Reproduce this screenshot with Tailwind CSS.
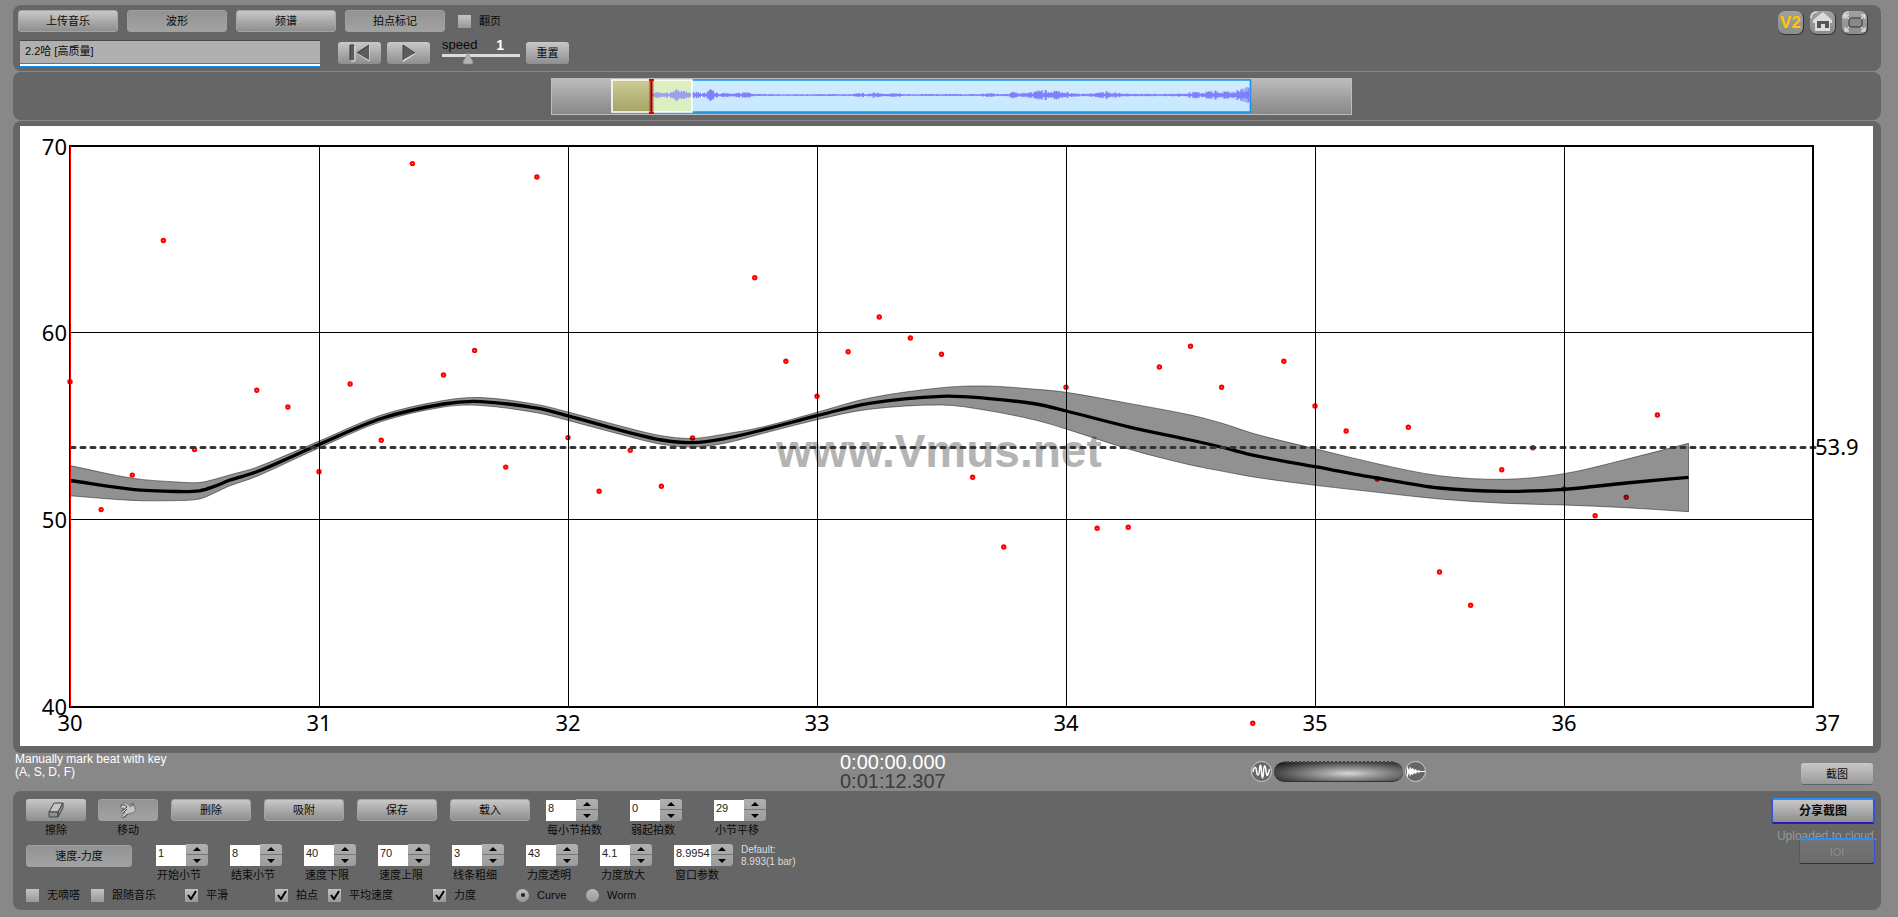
<!DOCTYPE html>
<html lang="zh-CN">

<head>
    <meta charset="UTF-8">
    <meta name="viewport" content="width=device-width, initial-scale=1.0">
    <title>Vmus.net</title>
    <script src="https://cdn.jsdelivr.net/npm/@tailwindcss/browser@4"></script>
</head>

<body class="min-h-screen bg-[#888] pt-[5px] pr-[17px] pb-[7px] pl-[13px] text-[11px] leading-[14px] text-[#0a0a0a]" style='font-family: "Liberation Sans", "Noto Sans CJK SC", sans-serif;'>

    <!-- Toolbar -->
    <header class="flex h-[66px] items-start justify-between rounded-lg bg-[#666] pt-[5px] pr-[13px] pl-[5px]">
        <div>
            <div class="flex h-[22px] items-center gap-[9px]">
                <button class="h-[22px] w-[100px] rounded-[3px] border border-[#a4a4a4] bg-linear-to-b from-[#c8c8c8] to-[#8e8e8e]">上传音乐</button>
                <button class="h-[22px] w-[100px] rounded-[3px] border border-[#a0a0a0] bg-linear-to-b from-[#939393] to-[#a2a2a2]">波形</button>
                <button class="h-[22px] w-[100px] rounded-[3px] border border-[#a4a4a4] bg-linear-to-b from-[#c8c8c8] to-[#8e8e8e]">频谱</button>
                <button class="h-[22px] w-[100px] rounded-[3px] border border-[#a0a0a0] bg-linear-to-b from-[#939393] to-[#a2a2a2]">拍点标记</button>
                <label class="flex items-center gap-2 pl-1"><input type="checkbox" class="size-[13px] appearance-none bg-linear-to-b from-[#c4c4c4] to-[#989898]">翻页</label>
            </div>
            <div class="flex h-[35px] items-start pt-2">
                <div class="ml-0.5 h-[27px] w-[300px] border-t border-[#484848] bg-[#b0b0b0]">
                    <input aria-label="Track" type="text" value="2.2哈 [高质量]" class="block h-[22px] w-full px-[5px] pb-1 text-[11px] outline-none">
                    <div class="h-[4px] border-y border-[#0a8cf0] bg-white"></div>
                </div>
                <button aria-label="Back to start" class="mt-0.5 ml-[18px] flex h-[22px] w-[43px] items-center justify-center rounded-[3px] bg-linear-to-b from-[#c8c8c8] to-[#8e8e8e]">
                    <svg width="22" height="18" viewBox="0 0 22 18"><path d="M2 17h4V2M20 1v16L8 9" fill="none" stroke="#ddd" /><path d="M1 1h4v15H1zM20 1v15L8 9z" fill="#5c5c5c" /><path d="M1 16V1h4M8 9l12-8" fill="none" stroke="#333" /></svg>
                </button>
                <button aria-label="Play" class="mt-0.5 ml-1.5 flex h-[22px] w-[43px] items-center justify-center rounded-[3px] bg-linear-to-b from-[#c8c8c8] to-[#8e8e8e]">
                    <svg width="14" height="18" viewBox="0 0 14 18"><path d="M1 17l12-8" fill="none" stroke="#ddd" stroke-width="2" /><path d="M1 1v15l12-7z" fill="#5c5c5c" /><path d="M1 16V1l12 8" fill="none" stroke="#444" /></svg>
                </button>
                <div class="relative ml-3 w-[78px]">
                    <label for="speed" class="-mt-[3px] flex justify-between pr-4 text-[13px] leading-[16px]"><span>speed</span><span class="text-[14px] font-bold text-white">1</span></label>
                    <input id="speed" type="range" min="0" max="3" value="1" class="mt-px block h-[3px] w-full appearance-none bg-[#dcdcdc] [&::-webkit-slider-thumb]:appearance-none">
                    <svg class="pointer-events-none absolute top-[13px] left-[20px]" width="12" height="12" viewBox="0 0 12 12"><path d="M6 0l5 9q0 2-2 2H3q-2 0-2-2z" fill="#b4b4b4" stroke="#8d8d8d" stroke-width=".6" /></svg>
                </div>
                <button class="mt-0.5 ml-1.5 h-[22px] w-[43px] rounded-[3px] bg-linear-to-b from-[#c8c8c8] to-[#8e8e8e]">重置</button>
            </div>
        </div>
        <nav class="flex gap-1.5 pt-px">
            <a href="#" class="flex h-6 w-[26px] items-center justify-center rounded-[7px] border-r border-b border-[#333] bg-linear-to-b from-[#a0a0a0] to-[#8c8c8c] text-[17px] font-bold text-[#ffc800]">V2</a>
            <a href="#" aria-label="Home" class="h-6 w-[26px] rounded-[7px] border-r border-b border-[#333] bg-linear-to-b from-[#a0a0a0] to-[#8c8c8c]">
                <svg width="25" height="23" viewBox="0 0 25 23"><path d="M1 7q0-6 6-6" fill="none" stroke="#ddd" stroke-width="1.5" /><path d="M13 1l9 8v3h-2v8H5v-8H3V9z" fill="#dcdcdc" /><path d="M7 10h12v7h-4v-4h-4v4H7z" fill="#555" /></svg>
            </a>
            <a href="#" aria-label="Fullscreen" class="h-6 w-[26px] rounded-[7px] border-r border-b border-[#333] bg-linear-to-b from-[#a0a0a0] to-[#8c8c8c]">
                <svg width="25" height="23" viewBox="0 0 25 23" fill="none"><path d="M1 7q0-6 6-6" stroke="#ddd" stroke-width="1.5" /><rect x="7" y="7" width="13" height="9" rx="2" fill="#888" stroke="#333" /><path d="M3 8V4h4M3 4l4 4M19 4h4v4M23 4l-4 4M3 16v4h4M3 20l4-4M19 20h4v-4M23 20l-4-4" stroke="#dcdcdc" stroke-width="1.3" /></svg>
            </a>
        </nav>
    </header>

    <!-- Overview waveform -->
    <section class="mt-px h-[48px] rounded-lg bg-[#666] pt-[6px]">
        <div class="ml-[28.8%] h-[37px] w-[42.9%] border border-[#bdbdbd] bg-linear-to-b from-[#bcbcbc] to-[#888]">
            <svg class="block h-full w-full" viewBox="0 0 800 36" preserveAspectRatio="none">
                <defs>
                    <linearGradient id="sky" x2="0" y2="1"><stop stop-color="#d4ecff" /><stop offset="1" stop-color="#c4e8ff" /></linearGradient>
                    <linearGradient id="sand" x2="0" y2="1"><stop stop-color="#cccc94" /><stop offset="1" stop-color="#a4a468" /></linearGradient>
                </defs>
                <rect x="100" y="1" width="599" height="33" fill="url(#sky)" stroke="#1493e8" stroke-width="1.6" />
                <rect x="60" y="1" width="40" height="33" fill="url(#sand)" />
                <rect x="100" y="1" width="40" height="33" fill="#dcefc0" />
                <path id="wave" stroke="#8080ff" stroke-width="1.2" fill="none" />
                <rect x="101" y="2" width="38" height="31" fill="#dcefc0" fill-opacity=".3" />
                <path d="M60 1h80v33H60z" fill="none" stroke="#fff" stroke-width="1.6" />
                <path d="M99.500 1v34" stroke="#e00000" stroke-opacity=".35" stroke-width="5" />
                <path d="M99.500 0v36" stroke="#900" stroke-width="2" />
                <path d="M97 0h5v2h-5zM97 34h5v2h-5z" fill="#e00000" />
            </svg>
        </div>
    </section>

    <!-- Tempo / dynamics chart -->
    <main class="mt-px rounded-lg bg-[#666] pt-[5px] pr-2 pb-[7px] pl-[7px]">
        <svg id="chart" class="block h-auto w-full bg-white" viewBox="20 126 1853 620" font-size="22" font-family="Noto Sans, sans-serif"></svg>
    </main>

    <!-- Status strip -->
    <section class="grid h-[38px] grid-cols-[827fr_411fr_550fr_80fr] items-start">
        <p class="pl-0.5 text-[12px] leading-[13px] text-white">Manually mark beat with key<br>(A, S, D, F)</p>
        <div class="text-[20px] leading-[19px] text-white">0:00:00.000<div class="text-[#3c3c3c]">0:01:12.307</div></div>
        <div class="flex items-center gap-0.5 pt-[7px]">
            <svg width="21" height="23" viewBox="0 0 21 23" fill="none"><circle cx="10.500" cy="11.500" r="10" fill="#666" stroke="#d0d0d0" /><path d="M2 12C3 6 5 6 5.500 11S8 17 8.500 10 10 4 10.500 12 12 20 12.500 12 14 4 15 11 17 16 18.500 9" stroke="#fff" stroke-width="1.500" /></svg>
            <div class="relative h-[21px] w-[129px]">
                <input aria-label="Zoom" type="range" class="block h-[21px] w-full appearance-none rounded-[10px] border-t border-b border-t-[#888] border-b-[#333] bg-[radial-gradient(ellipse_at_58%_60%,#d8d8d8_0%,#a4a4a4_22%,#6c6c6c_50%,#1c1c1c_90%)] [&::-webkit-slider-thumb]:invisible">
                <div class="pointer-events-none absolute top-0 right-[10px] left-[10px] border-t-2 border-dotted border-[#444]"></div>
            </div>
            <svg width="21" height="23" viewBox="0 0 21 23"><circle cx="10.500" cy="11.500" r="10" fill="#666" stroke="#d0d0d0" /><path d="M2 6l2 4 1-4 1 3 2-1 1 2 2-1 1 2 2-1 1 1h5v1h-5l-1 1-2-1-1 2-2-1-1 2-2-1-1 3-1-4-2 5z" fill="#fff" /></svg>
        </div>
        <button class="mt-2.5 mr-2 h-[22px] w-[72px] rounded-[3px] border-b border-[#5a6468] bg-linear-to-b from-[#c8c8c8] to-[#9a9a9a]">截图</button>
    </section>

    <!-- Settings -->
    <footer class="flex h-[119px] justify-between rounded-lg bg-[#666] pr-1.5 pl-[13px]">
        <div>
            <div class="flex pt-2">
                <div class="w-[60px] text-center">
                    <button id="erase" class="flex h-[22px] w-full items-center justify-center rounded-[3px] bg-linear-to-b from-[#c8c8c8] to-[#8e8e8e]">
                        <svg width="18" height="16" viewBox="0 0 18 16"><path d="M7 1h9l-5 9H2z" fill="#c4c4c4" stroke="#444" /><path d="M2 10h9v5H2zM11 10l5-9v5l-5 9z" fill="#909090" stroke="#444" /></svg>
                    </button>
                    <label for="erase" class="mt-0.5 block">擦除</label>
                </div>
                <div class="ml-3 w-[60px] text-center">
                    <button id="move" class="flex h-[22px] w-full items-center justify-center rounded-[3px] border border-[#a0a0a0] bg-linear-to-b from-[#939393] to-[#a2a2a2]">
                        <svg width="18" height="18" viewBox="0 0 18 18"><path d="M2 4q2-3 5-2l5 4V2l2 3V2l2 5q1 4-3 5l-4 1-5 4q-2 0-1-2l3-4-3 1q-2-1 0-3l2-1-3-1q-1-1 0-2z" fill="#c4c4c4" stroke="#666" stroke-width=".8" /><path d="M2 5q3-3 6 1l-5 4M8 8l-3 3M9 13l-5 4" fill="none" stroke="#444" /></svg>
                    </button>
                    <label for="move" class="mt-0.5 block">移动</label>
                </div>
                <div class="ml-[13px] flex gap-[13px]">
                    <button class="h-[22px] w-[80px] rounded-[3px] border border-[#a4a4a4] bg-linear-to-b from-[#c8c8c8] to-[#8e8e8e]">删除</button>
                    <button class="h-[22px] w-[80px] rounded-[3px] border border-[#a4a4a4] bg-linear-to-b from-[#c8c8c8] to-[#8e8e8e]">吸附</button>
                    <button class="h-[22px] w-[80px] rounded-[3px] border border-[#a4a4a4] bg-linear-to-b from-[#c8c8c8] to-[#8e8e8e]">保存</button>
                    <button class="h-[22px] w-[80px] rounded-[3px] border border-[#a4a4a4] bg-linear-to-b from-[#c8c8c8] to-[#8e8e8e]">载入</button>
                </div>
                <div id="beatSettings" class="ml-4 flex gap-8"></div>
            </div>
            <div class="flex pt-[7px]">
                <button class="mt-px h-[22px] w-[106px] rounded-[3px] border border-[#a0a0a0] bg-linear-to-b from-[#939393] to-[#a2a2a2]">速度-力度</button>
                <div id="viewSettings" class="ml-6 flex gap-[22px]"></div>
                <p class="ml-2 text-[10px] leading-[12px] text-[#ddd]">Default:<br>8.993(1 bar)</p>
            </div>
            <div id="options" class="mt-[6px] flex h-[14px] items-center"></div>
        </div>
        <div class="flex flex-col items-end pt-[7px] whitespace-nowrap">
            <button class="h-[26px] w-[104px] rounded-[3px] border-2 border-t-[#2a8cff] border-r-[#3c50e0] border-b-[#3a10c0] border-l-[#3c50e0] bg-linear-to-b from-[#c8c8c8] to-[#8e8e8e] text-[12px] font-bold">分享截图</button>
            <p class="-mr-0.5 h-[14px] pt-[5px] text-[12px] text-[#999]">Uploaded to cloud.</p>
            <button disabled class="h-[26px] w-[76px] rounded-[3px] border border-t-2 border-t-[#2a8cff] border-r-[#3c50e0] border-b-[#3a10c0] border-l-[#3c50e0] bg-linear-to-b from-[#7a7a7a]/70 to-[#6e6e6e]/70 text-[#8c8c8c]">IOI</button>
        </div>
    </footer>

    <script>
        // Spinner fields: [id, label, value]
        const beatFields = [['beats', '每小节拍数', '8'], ['pickup', '弱起拍数', '0'], ['shift', '小节平移', '29']];
        const viewFields = [
            ['barFrom', '开始小节', '1'], ['barTo', '结束小节', '8'], ['tempoMin', '速度下限', '40'], ['tempoMax', '速度上限', '70'],
            ['lineWidth', '线条粗细', '3'], ['dynAlpha', '力度透明', '43'], ['dynScale', '力度放大', '4.1'], ['windowSize', '窗口参数', '8.9954']
        ];

        function spinner([id, label, value]) {
            const width = id === 'windowSize' ? 'w-[37px]' : 'w-[30px]';
            return `
                <div>
                    <div class="flex">
                        <input id="${id}" type="text" value="${value}" class="${width} mt-px h-[21px] bg-white pb-1.5 pl-0.5 text-[11px] text-[#222] outline-none">
                        <div class="h-[22px] w-[22px] overflow-hidden rounded-r-[3px] bg-linear-to-b from-[#b0b0b0] to-[#9c9c9c]">
                            <button aria-label="+" class="flex h-[11px] w-full items-center justify-center border-b border-[#777]"><svg width="8" height="4"><path d="M0 4L4 0l4 4z" /></svg></button>
                            <button aria-label="-" class="flex h-[11px] w-full items-center justify-center"><svg width="8" height="4"><path d="M0 0l4 4 4-4z" /></svg></button>
                        </div>
                    </div>
                    <label for="${id}" class="mt-0.5 block w-[52px] pl-px whitespace-nowrap">${label}</label>
                </div>`;
        }
        document.getElementById('beatSettings').innerHTML = beatFields.map(spinner).join('');
        document.getElementById('viewSettings').innerHTML = viewFields.map(spinner).join('');

        // Tick boxes: [label, checked, cell width class]
        const ticks = [
            ['无嘀嗒', '', 'w-[65px]'], ['跟随音乐', '', 'w-[94px]'], ['平滑', 'checked', 'w-[90px]'],
            ['拍点', 'checked', 'w-[53px]'], ['平均速度', 'checked', 'w-[105px]'], ['力度', 'checked', 'w-[83px]']
        ];
        const radios = [['Curve', 'checked', 'w-[70px]'], ['Worm', '', 'w-[70px]']];
        document.getElementById('options').innerHTML =
            ticks.map(([label, on, width]) => `
                <label class="${width} relative flex items-center gap-2 whitespace-nowrap">
                    <input type="checkbox" ${on} class="peer size-[13px] appearance-none bg-linear-to-b from-[#c4c4c4] to-[#989898]">
                    <svg class="absolute top-0.5 left-0.5 hidden peer-checked:block" width="10" height="10" fill="none"><path d="M1 5l3 4 5-8" stroke="#000" stroke-width="2" /></svg>${label}
                </label>`).join('') +
            radios.map(([label, on, width]) => `
                <label class="${width} relative flex items-center gap-2">
                    <input type="radio" name="plot" ${on} class="peer size-[13px] appearance-none rounded-full bg-linear-to-b from-[#bcbcbc] to-[#989898]">
                    <span class="absolute left-[5px] hidden size-[4px] rounded-full bg-[#222] peer-checked:block"></span>${label}
                </label>`).join('');

        // Overview waveform envelope: [x, amplitude]
        const envelope = [
            [100, 1], [107, 4], [115, 2], [121, 3], [125, 7], [131, 4], [137, 2], [142, 4], [150, 1.5], [155, 3], [158, 6], [163, 3], [168, 1],
            [174, 2.5], [179, .8], [187, 2], [195, 2.5], [201, .8], [221, .4], [300, .5], [310, 2], [314, .5], [322, 2.5], [330, .8], [345, 1.5], [353, .5],
            [425, .6], [439, 1.5], [447, .5], [456, .8], [459, 3], [468, 1.5], [475, 2], [486, 4], [492, 4.5], [499, 5], [510, 4.5], [518, 1.5], [530, .8], [543, 1.5],
            [556, 3.5], [568, 1.5], [580, .8], [618, .8], [634, 1.5], [642, 3], [650, 2], [660, 4], [676, 4], [684, 5], [690, 6], [694, 9], [699, 6]
        ];
        let wave = '';
        for (let x = 100, i = 0; x < 699; x++) {
            while (envelope[i + 1][0] < x) i++;
            const [x0, a0] = envelope[i], [x1, a1] = envelope[i + 1];
            const a = (a0 + (a1 - a0) * (x - x0) / (x1 - x0)) * (.65 + .35 * Math.sin(x * x * 1.7)) + .5;
            wave += `M${x + .5} ${16.5 - a}V${16.5 + a}`;
        }
        document.getElementById('wave').setAttribute('d', wave);

        // Chart: bar number -> x
        const px = bar => 70 + 249 * (bar - 30);

        // Tempo curve with dynamics band: [bar, tempo, upper, lower]
        const curve = [
            [30, 480.5, 465.6, 495.8], [30.25, 489.3, 478.2, 500.4], [30.43, 491.5, 482, 500.6], [30.52, 490.8, 482.5, 499], [30.58, 486.4, 479.3, 493],
            [30.64, 480.3, 475, 486], [30.75, 471.8, 467.2, 476.4], [31, 444.5, 441.1, 448], [31.25, 418.5, 415, 421.6], [31.5, 404, 400.5, 407], [31.65, 401.6, 397.5, 405.5],
            [31.875, 408.2, 404.4, 412.8], [32, 415.8, 412, 420.4], [32.25, 432.8, 428.6, 437], [32.375, 440, 435.7, 444.3], [32.5, 442.6, 438.4, 447],
            [32.625, 438.8, 434.2, 443.5], [32.785, 429.7, 426.7, 433.3], [33, 415.7, 412.3, 419.7], [33.21, 403.3, 398, 409.3], [33.5, 396.3, 387.7, 405],
            [33.68, 398.3, 386, 410.3], [33.88, 404, 389.3, 420.3], [34, 411, 392.3, 429], [34.26, 427.3, 403.7, 449.7], [34.5, 440, 415, 465],
            [34.63, 447.5, 423.5, 471.3], [34.76, 455.7, 434, 477.3], [35, 466.7, 448.7, 485.3], [35.25, 478, 463.7, 492.3], [35.5, 488, 475.7, 499], [35.76, 491.3, 479.3, 503.3],
            [36, 489.3, 473.7, 505], [36.25, 483, 459.3, 507.7], [36.5, 477.3, 443.3, 511.7]
        ];
        // Beat dots: [bar, y]
        const dots = [
            [30, 381.8], [30.125, 509.6], [30.25, 475.1], [30.375, 240.5], [30.5, 449.5], [30.75, 390.2], [30.875, 407], [31, 471.7], [31.125, 384],
            [31.25, 440.3], [31.375, 163.6], [31.5, 374.9], [31.625, 350.4], [31.75, 467.1], [31.875, 177], [32, 437.6], [32.125, 491.2], [32.25, 450.3],
            [32.375, 486.3], [32.5, 438], [32.75, 277.8], [32.875, 361.3], [33, 396.3], [33.125, 351.7], [33.25, 317], [33.375, 338], [33.5, 354.3],
            [33.625, 477.3], [33.75, 547], [34, 387.3], [34.125, 528.3], [34.25, 527.3], [34.375, 367], [34.5, 346.2], [34.625, 387.3], [34.75, 723.3],
            [34.875, 361.3], [35, 406], [35.125, 431], [35.25, 479], [35.375, 427.3], [35.5, 572], [35.625, 605.3], [35.75, 469.7], [35.875, 447.7],
            [36, 489], [36.125, 515.7], [36.25, 497.3], [36.375, 415]
        ];

        // Smooth path through points, tangents taken from the neighbours
        function smooth(points) {
            const slope = i => {
                const a = points[Math.max(i - 1, 0)], b = points[Math.min(i + 1, points.length - 1)];
                return (b[1] - a[1]) / (b[0] - a[0]);
            };
            let d = points[0].join(' ');
            for (let i = 1; i < points.length; i++) {
                const [x0, y0] = points[i - 1], [x1, y1] = points[i], h = (x1 - x0) / 3;
                d += `C${x0 + h} ${y0 + slope(i - 1) * h} ${x1 - h} ${y1 - slope(i) * h} ${x1} ${y1}`;
            }
            return d;
        }
        const line = k => curve.map(p => [px(p[0]), p[k]]);

        let svg = `<text x="939" y="467" text-anchor="middle" font-family="Liberation Sans, sans-serif" font-size="46" font-weight="bold" fill="#b4b4b4">www.Vmus.net</text>`;
        dots.forEach(([bar, y]) => {
            svg += `<circle cx="${px(bar)}" cy="${y}" r="1.600" fill="#fff" stroke="#f00" stroke-width="2.200" />`;
        });
        svg += `<path d="M${smooth(line(2))}L${smooth(line(3).reverse())}Z" fill="#000" fill-opacity=".43" stroke="#000" stroke-opacity=".45" />`;
        svg += `<path d="M${smooth(line(1))}" fill="none" stroke="#000" stroke-width="3.300" />`;
        svg += `<path d="M71 447.500H1815" stroke="#333" stroke-width="3" stroke-dasharray="4 6" stroke-linecap="round" />`;
        svg += `<g shape-rendering="crispEdges">`;
        for (let bar = 31; bar < 37; bar++) svg += `<path d="M${px(bar) + .5} 146V707" stroke="#000" />`;
        svg += `<path d="M70 332.500H1813M70 519.500H1813" stroke="#000" /><rect x="70" y="146" width="1743" height="561" fill="none" stroke="#000" stroke-width="2" />`;
        svg += `<path d="M70.500 146V707" stroke="#f00" /></g>`;
        [[70, 155], [60, 341], [50, 528], [40, 715]].forEach(([tempo, y]) => {
            svg += `<text x="67" y="${y}" text-anchor="end">${tempo}</text>`;
        });
        for (let bar = 30; bar < 37; bar++) svg += `<text x="${px(bar)}" y="731" text-anchor="middle">${bar}</text>`;
        svg += `<text x="1815" y="731">37</text><text x="1815" y="455">53.9</text>`;
        document.getElementById('chart').innerHTML = svg;
    </script>
</body>

</html>
